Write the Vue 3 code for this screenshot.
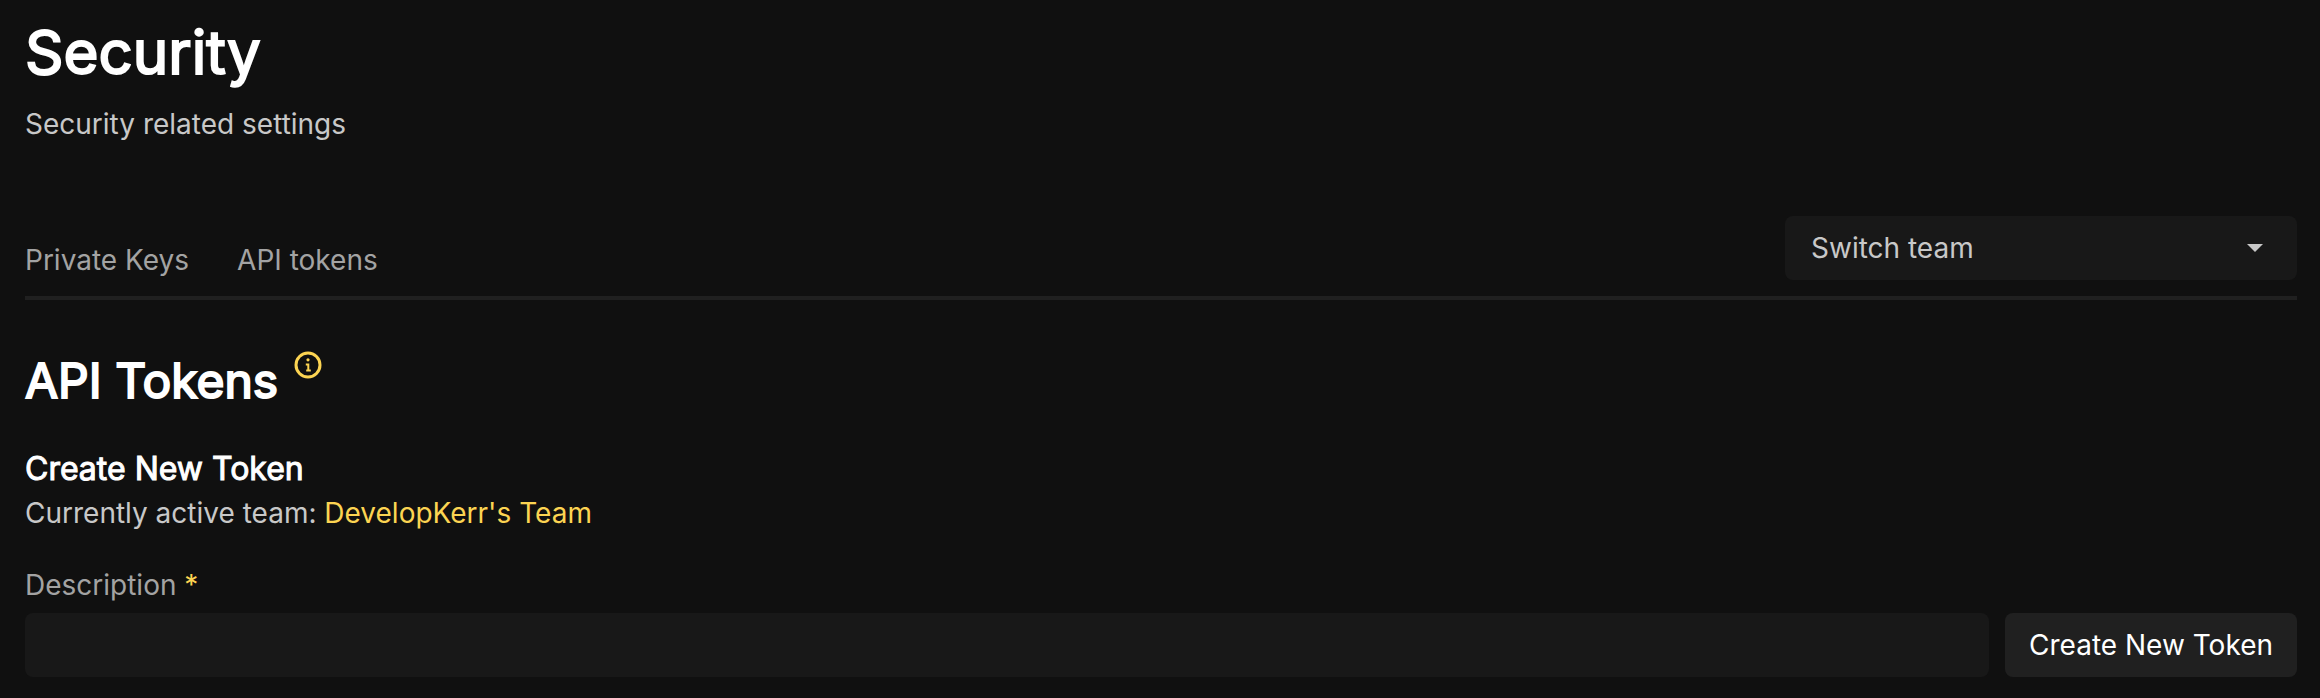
<script setup>
import { ref } from 'vue'

const tabs = ['Private Keys', 'API tokens']
const teams = ["DevelopKerr's Team"]
const team = ref('')
const description = ref('')
</script>

<template>
  <main class="page">
    <header>
      <h1>Security</h1>
      <p class="subtitle">Security related settings</p>
    </header>

    <div class="navbar">
      <nav class="tabs">
        <a v-for="tab in tabs" :key="tab" href="#">{{ tab }}</a>
      </nav>
      <div class="picker">
        <select v-model="team" aria-label="Switch team">
          <option value="" disabled>Switch team</option>
          <option v-for="name in teams" :key="name">{{ name }}</option>
        </select>
        <svg class="caret" viewBox="0 0 16 8" aria-hidden="true"><path d="M0 0h16L8 8z" fill="currentColor" /></svg>
      </div>
    </div>

    <section>
      <div class="heading">
        <h2>API Tokens</h2>
        <svg class="info" viewBox="0 0 32 32" fill="none" stroke="currentColor" stroke-width="3" aria-hidden="true">
          <circle cx="16" cy="16" r="12" />
          <path d="M13.8 15.5h2.5v6M14.2 21.4h4.6" stroke-width="2" />
          <circle cx="16" cy="10.8" r="1.6" fill="currentColor" stroke="none" />
        </svg>
      </div>
      <h3>Create New Token</h3>
      <p class="active">Currently active team: <span class="accent">DevelopKerr's Team</span></p>

      <form class="create" @submit.prevent>
        <div class="field">
          <label for="description">Description <span class="accent">*</span></label>
          <input id="description" v-model="description" type="text" required />
        </div>
        <button type="submit">Create New Token</button>
      </form>
    </section>
  </main>
</template>

<style>
html,
body {
  background: #101010;
}
</style>

<style scoped>
.page {
  padding: 16px 23px 21px 25px;
  color: #a3a3a3;
  font: 400 28px/40px Inter, sans-serif;
}

h1,
h2,
h3,
p {
  margin: 0;
  font-weight: 400;
}

h1,
h2,
h3 {
  color: #fff;
  -webkit-text-stroke: 2px #fff;
}

h1 {
  font-size: 60px;
  line-height: 72px;
}

h2 {
  font-size: 48px;
  line-height: 64px;
}

h3 {
  font-size: 32px;
  line-height: 48px;
  -webkit-text-stroke-width: 1px;
}

.subtitle {
  padding-top: 16px;
  color: #c8c8c8;
}

.active {
  color: #c8c8c8;
}

.accent {
  color: #fcd452;
}

.navbar {
  display: flex;
  align-items: flex-end;
  justify-content: space-between;
  margin-top: 72px;
  padding-bottom: 16px;
  border-bottom: 4px solid #202020;
}

.tabs {
  display: flex;
  gap: 48px;
}

.tabs a {
  color: inherit;
  text-decoration: none;
}

.picker {
  display: grid;
  align-items: center;
  width: 512px;
}

.picker > * {
  grid-area: 1 / 1;
}

select,
input,
button {
  box-sizing: border-box;
  height: 64px;
  margin: 0;
  border: 0;
  border-radius: 8px;
  background: #181818;
  color: #c8c8c8;
  font: inherit;
}

select {
  width: 100%;
  padding: 0 64px 0 26px;
  appearance: none;
}

.caret {
  justify-self: end;
  width: 16px;
  height: 8px;
  margin-right: 34px;
  color: #c8c8c8;
  pointer-events: none;
}

.heading {
  display: flex;
  gap: 14px;
  padding-top: 49px;
}

.info {
  width: 32px;
  height: 32px;
  color: #fcd452;
}

h3 {
  padding-top: 32px;
}

.create {
  display: flex;
  align-items: flex-end;
  gap: 16px;
  padding-top: 32px;
}

.field {
  display: flex;
  flex: 1;
  flex-direction: column;
  gap: 8px;
}

input {
  width: 100%;
  padding: 0 24px;
}

button {
  padding: 0 24px;
  background: #202020;
  color: #fff;
}
</style>
